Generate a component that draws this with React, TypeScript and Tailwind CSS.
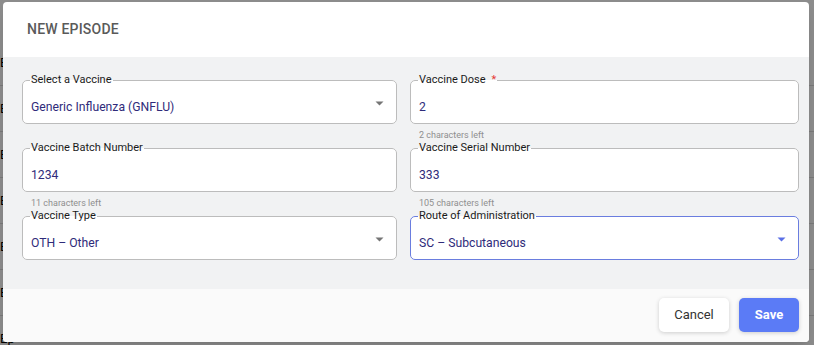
import React from "react"

interface FieldProps {
  label: string
  value: string
  required?: boolean
  select?: boolean
  active?: boolean
  helper?: string
}

function Caret({ active }: { active?: boolean }) {
  return (
    <svg width="9" height="5" viewBox="0 0 9 5" className="-mt-[7px] shrink-0">
      <path d="M0.5 0.5 L8.5 0.5 L4.5 4.5 Z" fill={active ? "#5a6fe6" : "#757575"} />
    </svg>
  )
}

function Field({ label, value, required, select, active, helper }: FieldProps) {
  return (
    <div className="h-[68px]">
      <fieldset
        className={
          "h-[50px] rounded-[5px] border bg-white pl-[7px] pr-[12px] " +
          (active ? "border-[#6a7ddf]" : "border-[#bcbcbc]")
        }
      >
        <legend className="px-[1px] text-[11px] leading-[12px] text-[#1a1a1a]">
          {label}
          {required && <span className="ml-[6px] text-[#e53935]">*</span>}
        </legend>
        <div className="flex items-center justify-between pl-[1px] pt-[13px]">
          <span className="text-[12.2px] leading-[16px] text-[#2f2b7a]">{value}</span>
          {select && <Caret active={active} />}
        </div>
      </fieldset>
      {helper && (
        <div className="pl-[9px] pt-[6px] text-[9px] leading-[11px] text-[#8f8f8f]">{helper}</div>
      )}
    </div>
  )
}

const bgRows = ["Eg", "Ed", "Eu", "Ex", "Er", "Ea", "Ep"]

export default function App() {
  return (
    <div
      className="relative h-[345px] w-[814px] overflow-hidden bg-white"
      style={{ fontFamily: "Roboto, 'Liberation Sans', sans-serif" }}
    >
      {/* page underneath */}
      <div className="pt-[40px]">
        {bgRows.map((r) => (
          <div key={r} className="flex h-[46px] items-center border-b border-[#dcdcdc] text-[13px] text-black">
            {r}
          </div>
        ))}
      </div>

      {/* overlay */}
      <div className="absolute inset-0 bg-black/45" />

      {/* modal */}
      <div className="absolute left-[3px] top-[2px] flex h-[340px] w-[806px] flex-col overflow-hidden rounded-[4px] bg-white shadow-lg">
        <div className="flex h-[55px] shrink-0 items-center pl-[24px] text-[14px] font-medium tracking-[0.2px] text-[#5a5a5a]">
          NEW EPISODE
        </div>

        <div className="flex h-[232px] shrink-0 gap-[13px] bg-[#f1f2f3] pl-[19px] pr-[10px] pt-[17px]">
          <div className="w-[375px] shrink-0">
            <Field label="Select a Vaccine" value="Generic Influenza (GNFLU)" select />
            <Field label="Vaccine Batch Number" value="1234" helper="11 characters left" />
            <Field label="Vaccine Type" value="OTH – Other" select />
          </div>
          <div className="flex-1">
            <Field label="Vaccine Dose" value="2" required helper="2 characters left" />
            <Field label="Vaccine Serial Number" value="333" helper="105 characters left" />
            <Field label="Route of Administration" value="SC – Subcutaneous" select active />
          </div>
        </div>

        <div className="flex flex-1 items-center justify-end gap-[10px] bg-[#fafafa] pb-[1px] pr-[10px]">
          <button className="h-[34px] w-[70px] rounded-[5px] bg-white text-[13px] text-[#333] shadow-[0_1px_4px_rgba(0,0,0,0.18)]">
            Cancel
          </button>
          <button className="h-[34px] w-[60px] rounded-[5px] bg-[#5b7bf6] text-[13px] font-bold text-white shadow-[0_1px_4px_rgba(0,0,0,0.18)]">
            Save
          </button>
        </div>
      </div>
    </div>
  )
}
